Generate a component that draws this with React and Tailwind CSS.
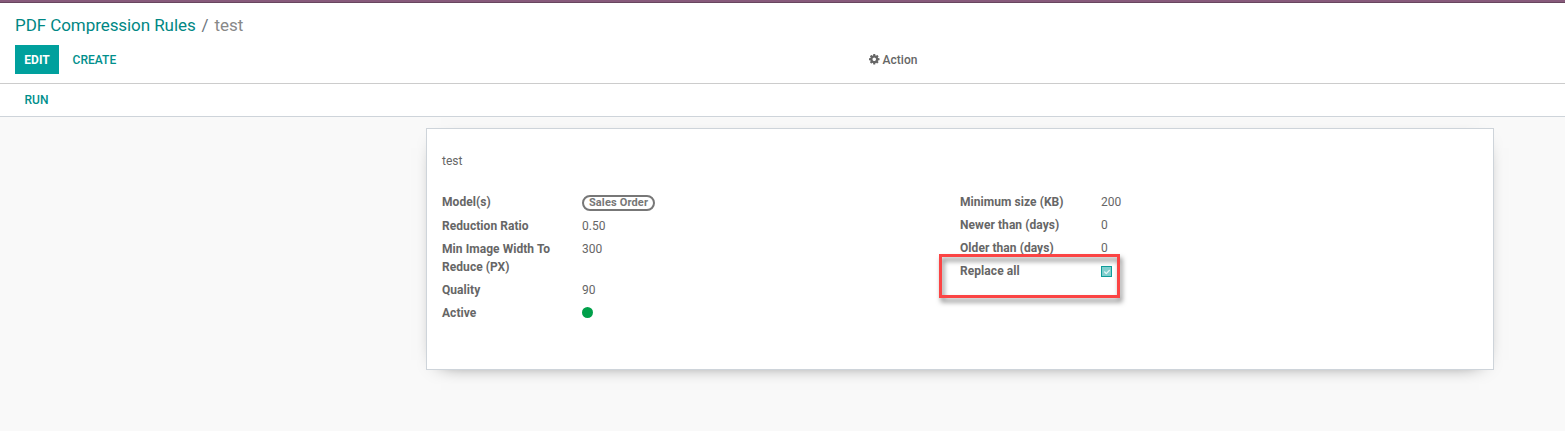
import { FaCheck } from "react-icons/fa";

function Gear() {
  return (
    <svg viewBox="0 0 1536 1536" className="size-[10.5px]" fill="currentColor">
      <path d="M1024 768q0-106-75-181t-181-75-181 75-75 181 75 181 181 75 181-75 75-181zm512-109v222q0 12-8 23t-20 13l-185 28q-19 54-39 91 35 50 107 138 10 12 10 25t-9 23q-27 37-99 108t-94 71q-12 0-26-9l-138-108q-44 23-91 38-16 136-29 186-7 28-36 28h-222q-14 0-24.500-8.500t-11.500-21.500l-28-184q-49-16-90-37l-141 107q-10 9-25 9-14 0-25-11-126-114-165-168-7-10-7-23 0-12 8-23 15-21 51-66.500t54-70.500q-27-50-41-99l-183-27q-13-2-21-12.500t-8-23.500v-222q0-12 8-23t19-13l186-28q14-46 39-92-40-57-107-138-10-12-10-24 0-10 9-23 26-36 98.500-107.500t94.500-71.500q13 0 26 10l138 107q44-23 91-38 16-136 29-186 7-28 36-28h222q14 0 24.500 8.500t11.500 21.500l28 184q49 16 90 37l142-107q9-9 24-9 13 0 25 10 129 119 165 170 7 8 7 22 0 12-8 23-15 21-51 66.500t-54 70.500q26 50 41 98l183 28q13 2 21 12.500t8 23.500z" />
    </svg>
  );
}

function Field({ label, children, className = "h-[23px]" }) {
  return (
    <div className={`flex ${className}`}>
      <div className="w-[140px] shrink-0 pr-4 font-bold tracking-[0.06px]">{label}</div>
      <div className="tracking-[0.06px]">{children}</div>
    </div>
  );
}

export default function App() {
  return (
    <div className="flex h-[431px] w-[1565px] flex-col overflow-hidden bg-[#f9f9f9] font-['Roboto',sans-serif] text-[12px] leading-[18px] text-[#666666]">
      <div className="h-[3px] shrink-0 border-b border-[#68465f] bg-[#875a7b]" />
      <header className="h-[81px] shrink-0 border-b border-[#cccccc] bg-white px-[15px] pt-[10px]">
        <nav className="flex h-[25px] items-center text-[17px] leading-[25px] tracking-[-0.07px]">
          <a className="text-[#008784]">PDF Compression Rules</a>
          <span className="px-[6px] text-[#6c757d]">/</span>
          <span className="text-[#888888]">test</span>
        </nav>
        <div className="mt-[7px] flex h-[29px] items-center">
          <button className="h-[29px] w-[44px] bg-[#00a09d] font-bold text-white">EDIT</button>
          <button className="ml-[13.5px] w-[45px] text-left font-medium tracking-[0.05px] text-[#008f8c]">CREATE</button>
          <button className="ml-[751.5px] flex items-center gap-[3px] font-medium tracking-[0.05px]">
            <Gear />
            Action
          </button>
        </div>
      </header>
      <div className="flex h-[33px] shrink-0 items-center border-b border-[#ced4da] bg-white pl-[24.5px] font-medium text-[#008f8c]">
        RUN
      </div>
      <main className="relative ml-[426px] mt-[11px] h-[242px] w-[1068px] border border-[#ced4da] bg-white px-[15px] pt-[23px] shadow-[0_5px_20px_-15px_black]">
        <div>test</div>
        <div className="mt-[23px] flex">
          <div className="w-[518px]">
            <Field label="Model(s)" className="h-[24px]">
              <span className="mt-[2px] flex h-[16px] w-[73px] items-center justify-center rounded-full border-2 border-[#777777] text-[11px] font-bold leading-[12px] tracking-[0.15px] text-[#777777]">
                Sales Order
              </span>
            </Field>
            <Field label="Reduction Ratio">0.50</Field>
            <Field label="Min Image Width To Reduce (PX)" className="h-[41px]">300</Field>
            <Field label="Quality">90</Field>
            <Field label="Active">
              <span className="mt-[3px] block size-[11px] rounded-full bg-[#00a04a]" />
            </Field>
          </div>
          <div className="[&>div>div:first-child]:w-[141px]">
            <Field label="Minimum size (KB)">200</Field>
            <Field label="Newer than (days)">0</Field>
            <Field label="Older than (days)">0</Field>
            <Field label="Replace all">
              <span className="mt-[4px] flex size-[11px] items-center justify-center border border-[#109c9a] bg-[#80cfce] text-[#e6f6f6]">
                <FaCheck className="size-[6px]" />
              </span>
            </Field>
          </div>
        </div>
        <div className="absolute left-[512px] top-[125px] h-[44px] w-[181px] border-3 border-[#fb4444] [filter:drop-shadow(2px_4px_2.5px_rgba(0,0,0,0.5))]" />
      </main>
    </div>
  );
}
